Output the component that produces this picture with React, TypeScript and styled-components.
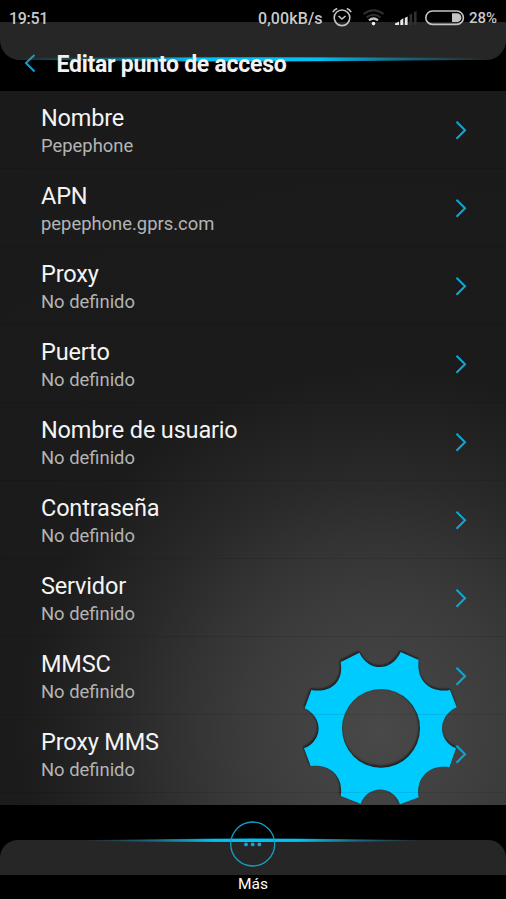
import React from "react";
import styled, { createGlobalStyle } from "styled-components";

const Global = createGlobalStyle`
  body { margin: 0; background: #000; font-family: Roboto, sans-serif; }
  *, *::before, *::after { box-sizing: border-box; }
`;

const Screen = styled.div`
  width: 506px;
  height: 899px;
  display: flex;
  flex-direction: column;
  overflow: hidden;
  background: #000;
`;

const Header = styled.header`
  position: relative;
  isolation: isolate;
  height: 91px;
  flex: none;
  background: #000;
  display: flex;
  flex-direction: column;
`;

const Plate = styled.div<{ $edge: "top" | "bottom" }>`
  position: absolute;
  z-index: -1;
  left: 0;
  right: 0;
  top: ${(p) => (p.$edge === "top" ? "22px" : "35px")};
  height: ${(p) => (p.$edge === "top" ? "38px" : "35px")};
  background: #262626;
  border-radius: ${(p) => (p.$edge === "top" ? "0 0 20px 20px" : "18px 18px 0 0")};
`;

const Glow = styled.svg`
  position: absolute;
  z-index: -1;
  left: 0;
  width: 506px;
  height: 8px;
`;
const HeaderGlow = styled(Glow)`
  top: 55px;
`;
const FooterGlow = styled(Glow)`
  top: 31px;
`;

const StatusBar = styled.div`
  display: flex;
  align-items: center;
  height: 36px;
  padding: 0 9px;
  color: #c9c9c9;
  font-size: 16px;
  font-weight: 500;
`;

const Clock = styled.span`
  flex: 1;
  letter-spacing: -0.3px;
`;
const Battery = styled.span`
  font-size: 15px;
  width: 28px;
`;
const Speed = styled.span`
  width: 73px;
  white-space: nowrap;
  letter-spacing: 0.1px;
`;
const StatusIcons = styled.svg`
  width: 138px;
  height: 36px;
`;

const TitleRow = styled.div`
  display: flex;
  align-items: center;
  height: 55px;
  padding-left: 24px;
  gap: 20.5px;
`;

const BackIcon = styled.svg`
  width: 12px;
  height: 20px;
  margin-top: -1px;
`;

const Title = styled.h1`
  margin: 2px 0 0;
  color: #f2f2f2;
  font-size: 23px;
  letter-spacing: -0.25px;
  font-weight: 700;
  line-height: 28px;
  white-space: nowrap;
`;

const List = styled.main`
  position: relative;
  isolation: isolate;
  height: 714px;
  flex: none;
  overflow: hidden;
  background: radial-gradient(circle at 380px 641px, #494949 0, #424242 70px, #3b3b3b 140px, #333333 195px, #292929 255px, #232323 300px, #1e1e1e 340px, #1b1b1b 365px, #1a1a1a 100%);
`;

const Gear = styled.svg`
  position: absolute;
  z-index: -1;
  left: 290px;
  top: 549px;
  width: 190px;
  height: 170px;
`;

const Row = styled.div`
  height: 78px;
  display: flex;
  align-items: center;
  justify-content: space-between;
  padding: 0 39px 0 41px;
  border-bottom: 1px solid rgba(0, 0, 0, 0.09);
`;

const Texts = styled.div`
  display: flex;
  flex-direction: column;
  margin-top: 5px;
`;

const Label = styled.div`
  color: #f4f4f4;
  font-size: 23.5px;
  letter-spacing: -0.17px;
  line-height: 28px;
`;

const Value = styled.div`
  color: #b4b4b4;
  font-size: 18.4px;
  line-height: 28px;
`;

const Arrow = styled.svg`
  width: 12px;
  height: 20px;
`;

const Footer = styled.footer`
  position: relative;
  isolation: isolate;
  flex: 1;
  display: flex;
  flex-direction: column;
  align-items: center;
  padding-top: 15px;
`;

const MoreIcon = styled.svg`
  width: 48px;
  height: 48px;
  flex: none;
`;

const MoreLabel = styled.span`
  margin-top: 6px;
  color: #fff;
  font-size: 15.5px;
  line-height: 20px;
`;

const rows = [
  ["Nombre", "Pepephone"],
  ["APN", "pepephone.gprs.com"],
  ["Proxy", "No definido"],
  ["Puerto", "No definido"],
  ["Nombre de usuario", "No definido"],
  ["Contraseña", "No definido"],
  ["Servidor", "No definido"],
  ["MMSC", "No definido"],
  ["Proxy MMS", "No definido"],
];

export default function App() {
  return (
    <>
      <Global />
      <Screen>
        <Header>
          <Plate $edge="top" />
          <HeaderGlow viewBox="0 0 506 8">
            <defs>
              <linearGradient id="beam">
                <stop offset="0" stopColor="#14a9d3" stopOpacity="0" />
                <stop offset="0.22" stopColor="#14a9d3" stopOpacity="0.55" />
                <stop offset="0.38" stopColor="#00c2f7" />
                <stop offset="0.64" stopColor="#00c2f7" />
                <stop offset="0.8" stopColor="#14a9d3" stopOpacity="0.55" />
                <stop offset="1" stopColor="#14a9d3" stopOpacity="0" />
              </linearGradient>
            </defs>
            <path d="M20 3Q253 1.5 486 3V5Q253 8 20 5Z" fill="url(#beam)" />
          </HeaderGlow>
          <StatusBar>
            <Clock>19:51</Clock>
            <Speed>0,00kB/s</Speed>
            <StatusIcons viewBox="331 0 138 36" fill="none" stroke="#c4c4c4" strokeWidth="1.6">
              <circle cx="342" cy="17.8" r="7.8" />
              <path d="M338.5 16l3.5 3 3.5-3M332.8 12.2q1.5-2.6 4.4-3.6M351.2 12.2q-1.5-2.6-4.4-3.6" />
              <path d="M363.5 14q10-7.5 20 0M366.6 17.400q6.900-5.200 13.800 0" stroke="#303030" strokeWidth="2" />
              <path d="M369 20.400q4.500-3.800 9 0" strokeWidth="2.200" />
              <circle cx="373.500" cy="23.600" r="1.800" fill="#eee" stroke="none" />
              <path fill="#e6e6e6" stroke="none" d="M395 25v-1.500l4-2V25zM400.300 25v-4.800l3-2V25zM404.800 25v-7l2.800-1.500V25z" />
              <path fill="#303030" stroke="none" d="M409.500 25V14.500l2.600-1V25zM414 25V12l2.600-1V25z" />
              <rect x="425.800" y="11" width="37.600" height="13.400" rx="6.700" />
              <path fill="#c4c4c4" stroke="none" d="M452 13.300h5a4.400 4.400 0 0 1 0 8.800h-5z" />
            </StatusIcons>
            <Battery>28%</Battery>
          </StatusBar>
          <TitleRow>
            <BackIcon viewBox="0 0 12 20" fill="none" stroke="#139fc8" strokeWidth="2">
              <path d="M10.5 2L2 10l8.5 8.5" />
            </BackIcon>
            <Title>Editar punto de acceso</Title>
          </TitleRow>
        </Header>
        <List>
          <Gear viewBox="0 0 570 510">
            <defs>
              <filter id="soft" x="-10%" y="-10%" width="120%" height="120%">
                <feGaussianBlur stdDeviation="3.5" />
              </filter>
              <path
                id="cog"
                fillRule="evenodd"
                d="M152 66L208 38C236 96 304 96 332 36L386 60C378 120 418 160 480 150L500 202C442 228 442 302 498 325L478 382C418 372 376 414 386 472L330 493C308 434 234 434 212 491L152 468C162 410 120 370 62 378L42 325C100 300 100 232 44 205L64 150C124 160 162 124 152 66ZM156 265a117 118 0 1 0 234 0a117 118 0 1 0 -234 0Z"
              />
            </defs>
            <use href="#cog" fill="#101010" opacity="0.9" filter="url(#soft)" transform="translate(-2 -4)" />
            <use href="#cog" fill="#00cbff" />
          </Gear>
          {rows.map(([label, value]) => (
            <Row key={label}>
              <Texts>
                <Label>{label}</Label>
                <Value>{value}</Value>
              </Texts>
              <Arrow viewBox="0 0 12 20" fill="none" stroke="#11a5d1" strokeWidth="2.1">
                <path d="M1.5 1.800L10 10.300L1.500 18.800" />
              </Arrow>
            </Row>
          ))}
        </List>
        <Footer>
          <Plate $edge="bottom" />
          <FooterGlow viewBox="0 0 506 8">
            <path d="M85 4Q253 1 421 4V5Q253 7 85 5Z" fill="url(#beam)" />
          </FooterGlow>
          <MoreIcon viewBox="0 0 48 48">
            <circle cx="23.7" cy="24" r="22" fill="none" stroke="#159dc2" strokeWidth="1.3" />
            <circle cx="17" cy="24.4" r="1.9" fill="#0fa9d4" />
            <circle cx="23.7" cy="24.4" r="1.9" fill="#0fa9d4" />
            <circle cx="30.4" cy="24.4" r="1.9" fill="#0fa9d4" />
          </MoreIcon>
          <MoreLabel>Más</MoreLabel>
        </Footer>
      </Screen>
    </>
  );
}
